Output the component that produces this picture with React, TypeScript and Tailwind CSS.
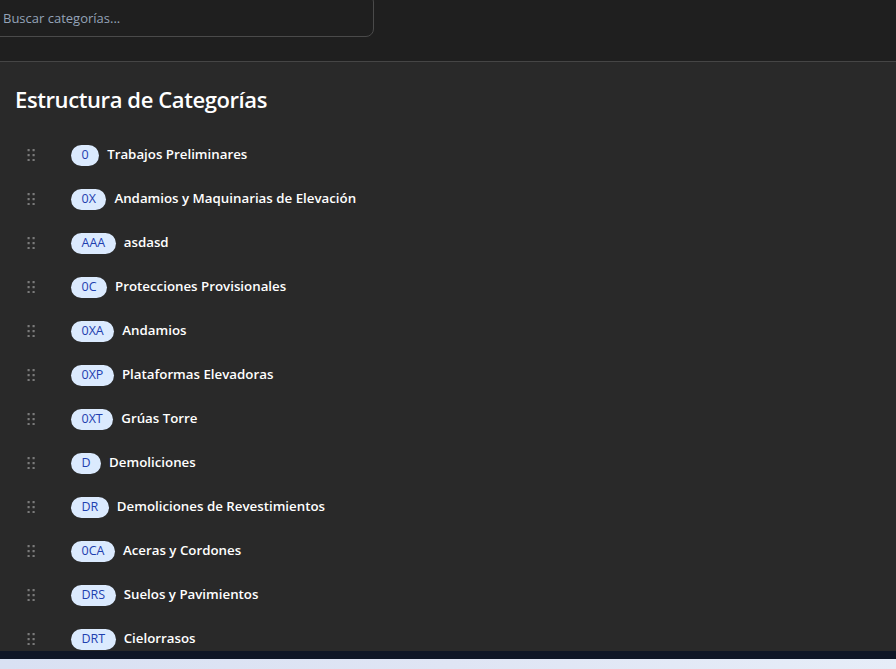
import React from "react";

const items: [string, string][] = [
  ["0", "Trabajos Preliminares"],
  ["0X", "Andamios y Maquinarias de Elevación"],
  ["AAA", "asdasd"],
  ["0C", "Protecciones Provisionales"],
  ["0XA", "Andamios"],
  ["0XP", "Plataformas Elevadoras"],
  ["0XT", "Grúas Torre"],
  ["D", "Demoliciones"],
  ["DR", "Demoliciones de Revestimientos"],
  ["0CA", "Aceras y Cordones"],
  ["DRS", "Suelos y Pavimientos"],
  ["DRT", "Cielorrasos"],
];

function Grip() {
  return (
    <svg width="8" height="12" viewBox="0 0 8 12" className="text-[#7a7a7a]">
      {[0, 5, 10].map((y) =>
        [0, 5].map((x) => (
          <rect key={`${x}-${y}`} x={x + 0.5} y={y} width="2.2" height="2.2" rx="0.5" fill="currentColor" />
        ))
      )}
    </svg>
  );
}

export default function App() {
  return (
    <div
      className="w-[896px] h-[669px] overflow-hidden flex flex-col"
      style={{ fontFamily: '"Open Sans", "Noto Sans", sans-serif' }}
    >
      <div className="h-[62px] shrink-0 bg-[#1f1f1f] border-b border-[#454545] overflow-hidden">
        <div className="-mt-[6px] -ml-[12px] w-[386px] h-[43px] rounded-lg border border-[#4a4a4a] flex items-center pl-[14px] pt-[6px]">
          <span className="text-[13px] text-[#94a3b8]">Buscar categorías...</span>
        </div>
      </div>
      <div className="h-[589px] shrink-0 bg-[#292929] pl-[15px] overflow-hidden">
        <h2 className="text-[22px] font-semibold text-white leading-none mt-[26px] tracking-[-0.4px]">
          Estructura de Categorías
        </h2>
        <div className="mt-[23px] flex flex-col">
          {items.map(([code, name]) => (
            <div key={code} className="h-[44px] flex items-center shrink-0">
              <div className="w-[56px] pl-[12px] flex items-center">
                <Grip />
              </div>
              <span className="h-[21px] px-[10.5px] rounded-full bg-[#dbeafe] text-[#1e40af] text-[12.5px] font-medium flex items-center leading-none">
                {code}
              </span>
              <span className="ml-[8px] text-[13.3px] font-semibold text-white">{name}</span>
            </div>
          ))}
        </div>
      </div>
      <div className="h-[8px] shrink-0 bg-[#0f1626]" />
      <div className="flex-1 bg-gradient-to-r from-[#d9e1f3] via-[#dfe5f4] to-[#e6edf8]" />
    </div>
  );
}
